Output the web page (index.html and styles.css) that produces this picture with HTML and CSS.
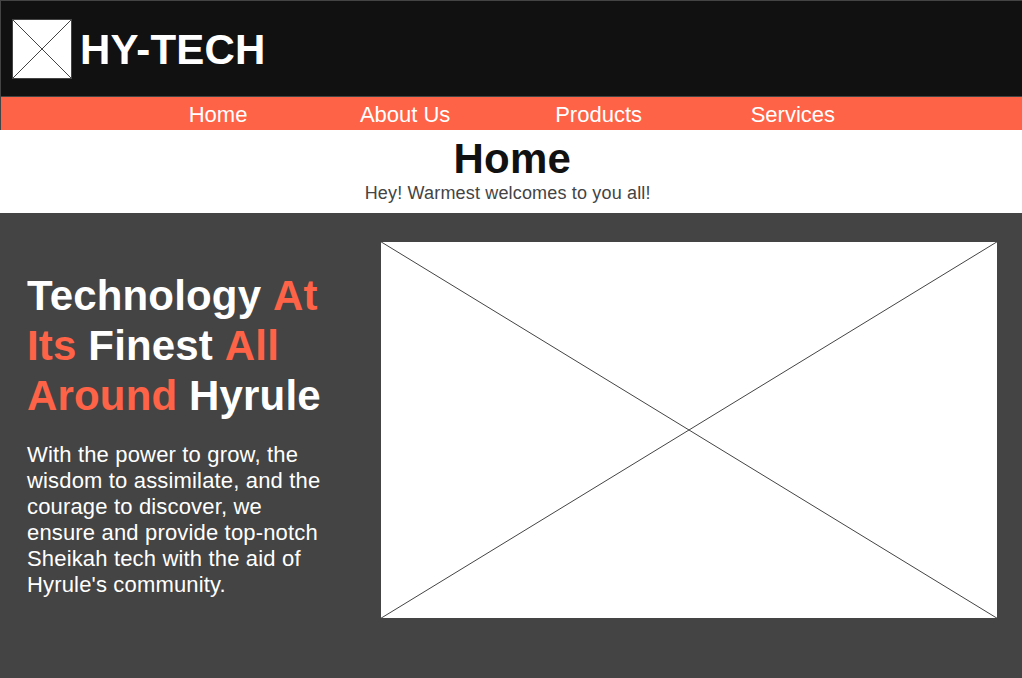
FILE: index.html
```html
<!DOCTYPE html>
<html lang="en">
<head>
<meta charset="utf-8">
<title>HY-TECH</title>
<link rel="stylesheet" href="styles.css">
</head>
<body>
<header class="brand">
  <svg class="logo" viewBox="0 0 60 60"><rect x=".5" y=".5" width="59" height="59"/><path d="M.5.5l59 59M59.5.5l-59 59"/></svg>
  <span class="brand-name">HY-TECH</span>
</header>
<nav class="nav">
  <a>Home</a><a>About Us</a><a>Products</a><a>Services</a>
</nav>
<section class="intro">
  <h1>Home</h1>
  <p>Hey! Warmest welcomes to you all!</p>
</section>
<main class="hero">
  <div class="copy">
    <h2>Technology <em>At</em><br><em>Its</em> Finest <em>All</em><br><em>Around</em> Hyrule</h2>
    <p>With the power to grow, the<br>wisdom to assimilate, and the<br>courage to discover, we<br>ensure and provide top-notch<br>Sheikah tech with the aid of<br>Hyrule's community.</p>
  </div>
  <svg class="picture" viewBox="0 0 618 378"><rect x=".5" y=".5" width="617" height="377"/><path d="M.5.5l617 377M617.5.5l-617 377"/></svg>
</main>
</body>
</html>
```
FILE: styles.css
```css
* { box-sizing: border-box; margin: 0; padding: 0; }
body {
  width: 1022px;
  height: 678px;
  overflow: hidden;
  display: flex;
  flex-direction: column;
  font-family: "Liberation Sans", Arial, sans-serif;
  background: #444;
}
svg { fill: #fff; stroke: #444; stroke-width: 1; flex: none; }
.brand {
  height: 97px;
  display: flex;
  align-items: center;
  gap: 8px;
  padding-left: 11px;
  background: #111;
  border: 1px solid #444;
  border-right: 0;
}
.logo { width: 60px; height: 60px; }
.brand-name { font-size: 42px; font-weight: bold; color: #fff; line-height: 50px; padding-top: 2px; letter-spacing: .17px; }
.nav {
  height: 33px;
  display: grid;
  grid-template-columns: 171.2px 195.3px 195.5px 218px;
  padding: 4px 0 0 187.7px;
  font-size: 22px;
  line-height: 28px;
  color: #fff;
  background: #ff6347;
  border-left: 1px solid #444;
}
.intro { height: 83px; background: #fff; text-align: center; }
.intro h1 { font-size: 42px; line-height: 50px; color: #111; padding: 4px 0 0 2.5px; letter-spacing: .17px; }
.intro p { font-size: 18px; line-height: 18px; color: #444; padding-right: 6.6px; letter-spacing: .17px; }
.hero { flex: 1; display: flex; align-items: flex-start; padding: 28px 0 0 27px; }
.copy { width: 353px; padding-top: 30px; color: #fff; white-space: nowrap; }
.copy h2 { font-size: 42px; line-height: 50px; letter-spacing: .16px; }
.copy em { display: inline-block; font-style: normal; color: #ff6347; }
.copy p { margin-top: 21px; font-size: 22px; line-height: 26px; letter-spacing: .165px; }
.picture { width: 618px; height: 378px; }
```
